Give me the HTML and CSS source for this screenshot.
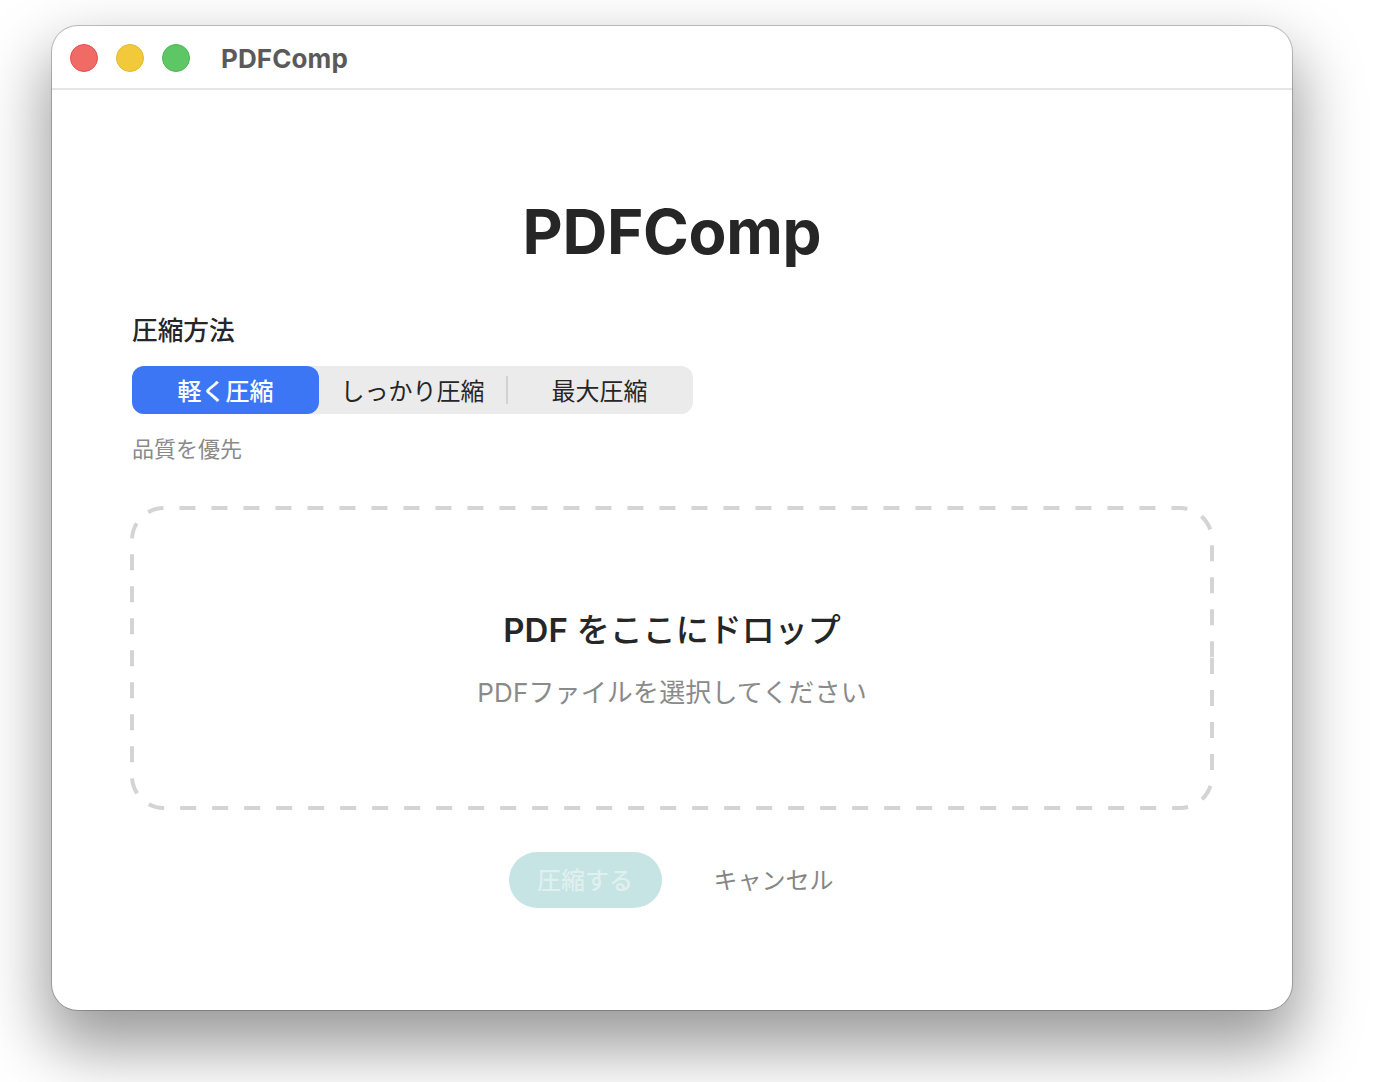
FILE: index.html
```html
<!DOCTYPE html>
<html lang="ja">
<head>
<meta charset="utf-8">
<title>PDFComp</title>
<link rel="stylesheet" href="styles.css">
</head>
<body>
<div class="window">
  <header class="titlebar">
    <span class="light red"></span>
    <span class="light yellow"></span>
    <span class="light green"></span>
    <span class="app-name">PDFComp</span>
  </header>
  <main class="content">
    <h1 class="heading">PDFComp</h1>
    <div class="field-label">圧縮方法</div>
    <div class="segments">
      <div class="segment active">軽く圧縮</div>
      <div class="segment">しっかり圧縮</div>
      <div class="divider"></div>
      <div class="segment">最大圧縮</div>
    </div>
    <div class="hint">品質を優先</div>
    <section class="dropzone">
      <svg class="dash" width="1084" height="304" viewBox="0 0 1084 304"><path d="M1082 152V270A32 32 0 0 1 1050 302H34A32 32 0 0 1 2 270V34A32 32 0 0 1 34 2H1050A32 32 0 0 1 1082 34V152"/></svg>
      <div class="drop-title"><span class="latin">PDF</span> をここにドロップ</div>
      <div class="drop-sub">PDFファイルを選択してください</div>
    </section>
    <div class="actions">
      <button class="btn primary">圧縮する</button>
      <button class="btn cancel">キャンセル</button>
    </div>
  </main>
</div>
</body>
</html>
```
FILE: styles.css
```css
* { box-sizing: border-box; }
html, body { margin: 0; height: 100%; background: #fff; overflow: hidden; }
body {
  padding: 26px 0 0 52px;
  font-family: Inter, "Noto Sans CJK JP", sans-serif;
}
.window {
  width: 1240px;
  height: 984px;
  background: #fff;
  border-radius: 26px;
  overflow: hidden;
  box-shadow: 0 0 0 1px rgba(0,0,0,.22), 0 32px 64px 6px rgba(0,0,0,.4);
  display: flex;
  flex-direction: column;
}
.titlebar {
  height: 64px;
  border-bottom: 2px solid #e5e5e5;
  display: flex;
  align-items: center;
  padding: 2px 0 0 18px;
  flex: none;
}
.light {
  width: 28px;
  height: 28px;
  border-radius: 50%;
  margin-right: 18px;
  border: 1px solid;
  flex: none;
}
.red { background: #f06b65; border-color: #e5504a; }
.yellow { background: #f3c93c; border-color: #e6b72c; }
.green { background: #5fc666; border-color: #4cb553; }
.app-name {
  margin-left: 13px;
  font-size: 26px;
  letter-spacing: .1px;
  font-weight: 700;
  color: #5a5a5a;
}
.content { padding: 0 80px; display: flex; flex-direction: column; }
.heading {
  margin: 103px 0 0;
  text-align: center;
  font-size: 62px;
  letter-spacing: -.3px;
  line-height: 78px;
  font-weight: 700;
  color: #262626;
}
.field-label {
  margin-top: 42px;
  font-size: 25.7px;
  line-height: 36px;
  font-weight: 500;
  color: #262626;
}
.segments {
  margin-top: 17px;
  width: 561px;
  height: 48px;
  background: #ebebeb;
  border-radius: 12px;
  display: flex;
  align-items: center;
}
.segment {
  width: 187px;
  height: 48px;
  line-height: 51px;
  text-align: center;
  font-size: 24px;
  color: #262626;
  border-radius: 12px;
  flex: none;
}
.segment.active { background: #3c76f5; color: #fff; font-weight: 500; }
.divider { width: 2px; height: 28px; background: #d2d2d2; margin-right: -2px; flex: none; }
.hint {
  margin-top: 20px;
  font-size: 22px;
  line-height: 30px;
  color: #8a8a8a;
}
.dropzone {
  position: relative;
  margin: 42px 0 0 -2px;
  width: 1084px;
  height: 304px;
  display: flex;
  flex-direction: column;
  align-items: center;
  padding-top: 100px;
}
.dash { position: absolute; left: 0; top: 0; }
.dash path { fill: none; stroke: #d4d4d4; stroke-width: 4; stroke-dasharray: 16 16; }
.drop-title {
  font-size: 33px;
  line-height: 48px;
  font-weight: 500;
  color: #262626;
}
.latin { font-weight: 600; }
.drop-sub {
  margin-top: 21px;
  font-size: 26px;
  letter-spacing: .15px;
  line-height: 36px;
  color: #8a8a8a;
}
.actions {
  margin-top: 42px;
  padding-right: 2px;
  display: flex;
  justify-content: center;
  align-items: center;
  gap: 52px;
}
.btn {
  font-family: inherit;
  font-size: 24px;
  border: 0;
  background: none;
  padding: 0 0 4px;
}
.primary {
  width: 153px;
  height: 56px;
  border-radius: 28px;
  background: #c6e4e3;
  color: #dff0ef;
  font-weight: 500;
}
.cancel { color: #858585; }
```
